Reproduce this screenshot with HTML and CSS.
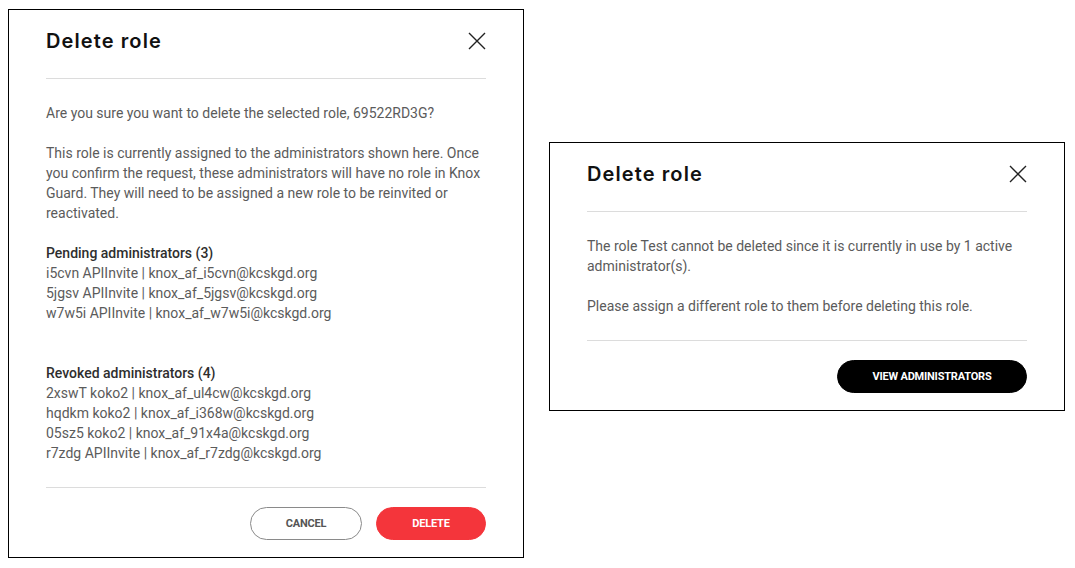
FILE: index.html
```html
<!DOCTYPE html>
<html>
<head>
<meta charset="utf-8">
<link rel="stylesheet" href="styles.css">
</head>
<body>
<div class="page">
  <div class="dialog">
    <div class="dialog-header">
      <h2 class="dialog-title">Delete role</h2>
      <button class="close-btn" aria-label="Close">
        <svg width="18" height="18" viewBox="0 0 18 18"><path d="M1 1 L17 17 M17 1 L1 17" stroke="#222" stroke-width="1.4" fill="none"/></svg>
      </button>
    </div>
    <div class="dialog-body">
      <p class="para">Are you sure you want to delete the selected role, 69522RD3G?</p>
      <p class="para">This role is currently assigned to the administrators shown here. Once you confirm the request, these administrators will have no role in Knox Guard. They will need to be assigned a new role to be reinvited or reactivated.</p>
      <div class="group">
        <div class="group-title">Pending administrators (3)</div>
        <div class="item">i5cvn APIInvite | knox_af_i5cvn@kcskgd.org</div>
        <div class="item">5jgsv APIInvite | knox_af_5jgsv@kcskgd.org</div>
        <div class="item">w7w5i APIInvite | knox_af_w7w5i@kcskgd.org</div>
      </div>
      <div class="group group-last">
        <div class="group-title">Revoked administrators (4)</div>
        <div class="item">2xswT koko2 | knox_af_ul4cw@kcskgd.org</div>
        <div class="item">hqdkm koko2 | knox_af_i368w@kcskgd.org</div>
        <div class="item">05sz5 koko2 | knox_af_91x4a@kcskgd.org</div>
        <div class="item">r7zdg APIInvite | knox_af_r7zdg@kcskgd.org</div>
      </div>
    </div>
    <div class="dialog-footer">
      <button class="btn btn-outline btn-cancel">CANCEL</button>
      <button class="btn btn-red btn-delete">DELETE</button>
    </div>
  </div>

  <div class="dialog dialog-second">
    <div class="dialog-header">
      <h2 class="dialog-title">Delete role</h2>
      <button class="close-btn" aria-label="Close">
        <svg width="18" height="18" viewBox="0 0 18 18"><path d="M1 1 L17 17 M17 1 L1 17" stroke="#222" stroke-width="1.4" fill="none"/></svg>
      </button>
    </div>
    <div class="dialog-body">
      <p class="para">The role Test cannot be deleted since it is currently in use by 1 active administrator(s).</p>
      <p class="para para-last">Please assign a different role to them before deleting this role.</p>
    </div>
    <div class="dialog-footer">
      <button class="btn btn-black btn-view">VIEW ADMINISTRATORS</button>
    </div>
  </div>
</div>
</body>
</html>
```
FILE: styles.css
```css
* { box-sizing: border-box; }
html, body { margin: 0; padding: 0; background: #fff; }
body { padding: 9px 8px; font-family: Roboto, "Liberation Sans", sans-serif; }

.page {
  display: flex;
  align-items: flex-start;
  gap: 25px;
}

.dialog {
  width: 516px;
  border: 1px solid #000;
  background: #fff;
  padding: 0 37px;
  display: flex;
  flex-direction: column;
}
.dialog-second { margin-top: 133px; }

.dialog-header {
  display: flex;
  align-items: center;
  justify-content: space-between;
  padding: 19px 0 25px;
  border-bottom: 1px solid #dcdcdc;
}
.dialog-title {
  margin: 0;
  font-family: Inter, "DejaVu Sans", sans-serif;
  font-weight: 600;
  font-size: 20px;
  line-height: 24px;
  letter-spacing: 1.1px;
  color: #111;
}
.close-btn {
  border: 0;
  background: none;
  padding: 0;
  width: 18px;
  height: 18px;
  display: flex;
  cursor: pointer;
}

.dialog-body {
  padding: 24px 0 24px;
  border-bottom: 1px solid #dcdcdc;
  font-size: 14px;
  line-height: 20px;
  color: #5b5b5b;
}
.para { margin: 0 0 20px; }
.para-last { margin-bottom: 0; }
.group { margin-bottom: 40px; }
.group-last { margin-bottom: 0; }
.group-title { font-weight: 500; color: #2e2e2e; }

.dialog-footer {
  display: flex;
  justify-content: flex-end;
  gap: 14px;
  padding: 19px 0 17px;
}
.btn {
  height: 33px;
  border-radius: 17px;
  font-family: Roboto, "Liberation Sans", sans-serif;
  font-size: 11px;
  font-weight: 700;
  letter-spacing: -0.2px;
  border: 1px solid transparent;
  cursor: pointer;
}
.btn-outline { background: #fff; border-color: #8a8a8a; color: #555; }
.btn-red { background: #f4353b; color: #fff; border-color: #f4353b; }
.btn-black { background: #000; color: #fff; border-color: #000; }
.btn-cancel { width: 112px; }
.btn-delete { width: 110px; }
.btn-view { width: 190px; }
```
